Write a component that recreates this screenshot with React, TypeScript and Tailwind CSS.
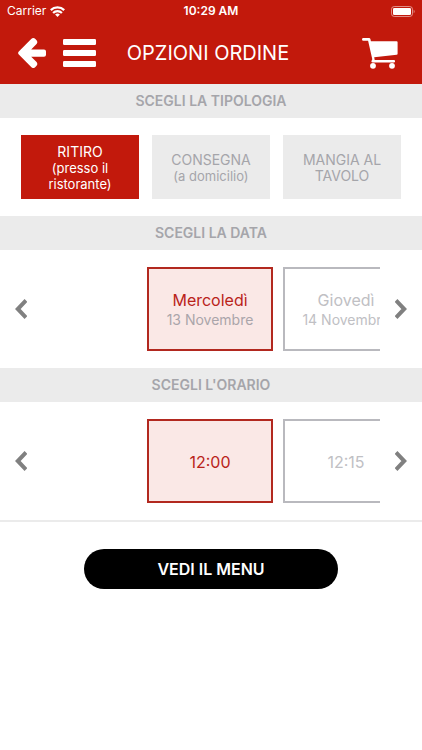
interface Option {
  id: string;
  title: string;
  detail?: string;
}

const ORDER_TYPES: Option[] = [
  { id: "pickup", title: "RITIRO", detail: "(presso il ristorante)" },
  { id: "delivery", title: "CONSEGNA", detail: "(a domicilio)" },
  { id: "table", title: "MANGIA AL TAVOLO" },
];

const DATES: Option[] = [
  { id: "13", title: "Mercoledì", detail: "13 Novembre" },
  { id: "14", title: "Giovedì", detail: "14 Novembre" },
];

const TIMES: Option[] = [
  { id: "1200", title: "12:00" },
  { id: "1215", title: "12:15" },
];

function StatusBar() {
  return (
    <div className="grid h-[22px] grid-cols-3 items-center px-[7px] text-xs">
      <div className="flex items-center gap-1">
        <span>Carrier</span>
        <svg width="15" height="11" viewBox="0 0 15 11" aria-hidden="true">
          <g fill="none" stroke="currentColor" strokeWidth="2.2">
            <path d="M.8 4.1a9.5 9.5 0 0 1 13.4 0" />
            <path d="M3.1 6.9a6.2 6.2 0 0 1 8.8 0" />
          </g>
          <path d="M5.1 8.6a3.5 3.5 0 0 1 4.8 0L7.5 11z" fill="currentColor" />
        </svg>
      </div>
      <span className="text-center font-semibold">10:29 AM</span>
      <svg className="justify-self-end" width="24" height="11" viewBox="0 0 24 11" aria-hidden="true">
        <rect x=".5" y=".5" width="21" height="10" rx="2.8" fill="none" stroke="currentColor" strokeOpacity=".5" />
        <rect x="2" y="2" width="18" height="7" rx="1.3" fill="currentColor" />
        <path d="M22.7 3.8c1.3.4 1.3 3 0 3.4z" fill="currentColor" fillOpacity=".5" />
      </svg>
    </div>
  );
}

function Header() {
  return (
    <header className="bg-[#c2190c] text-white">
      <StatusBar />
      <div className="flex h-[62px] items-center pr-6 pl-[18px]">
        <div className="flex flex-1 items-center gap-4">
          <button type="button" aria-label="Indietro">
            <svg className="block" width="29" height="30" viewBox="0 0 29 30" fill="currentColor" aria-hidden="true">
              <path d="M.8 13.6L13.2 1.1a3 3 0 0 1 4.2 0l.9 1a3 3 0 0 1 0 4.2L13.2 11.4H26a2 2 0 0 1 2 2v3.3a2 2 0 0 1-2 2H13.2l5.1 5.1a3 3 0 0 1 0 4.2l-.9 1a3 3 0 0 1-4.2 0L.8 16.4a2 2 0 0 1 0-2.8z" />
            </svg>
          </button>
          <button type="button" aria-label="Menu">
            <svg className="block" width="33" height="28" viewBox="0 0 33 28" fill="currentColor" aria-hidden="true">
              <rect y="0" width="33" height="6" rx="1.2" />
              <rect y="11" width="33" height="6" rx="1.2" />
              <rect y="22" width="33" height="6" rx="1.2" />
            </svg>
          </button>
        </div>
        <h1 className="text-xl">OPZIONI ORDINE</h1>
        <div className="flex flex-1 justify-end">
          <button type="button" aria-label="Carrello">
            <svg className="block" width="36" height="31" viewBox="0 0 36 31" fill="currentColor" aria-hidden="true">
              <path d="M1.4 0H7a1.5 1.5 0 0 1 1.4 1.1L8.9 3.2H34.6a1 1 0 0 1 1 1v11.6a1 1 0 0 1-.9 1L12.2 19.2l.5 2.8h19.1a1.3 1.3 0 0 1 0 2.6H10.6a1.3 1.3 0 0 1-1-1.9l.7-1.4L6.1 2.8H1.4a1.4 1.4 0 0 1 0-2.8z" />
              <circle cx="11" cy="27.8" r="2.9" />
              <circle cx="30" cy="27.8" r="2.9" />
            </svg>
          </button>
        </div>
      </div>
    </header>
  );
}

function SectionTitle({ children }: { children: string }) {
  return (
    <h2 className="flex h-[34px] items-center justify-center bg-[#ebebeb] text-sm font-semibold text-[#a5a5aa]">
      {children}
    </h2>
  );
}

function Chevron({ d }: { d: string }) {
  return (
    <svg width="12" height="20" viewBox="0 0 12 20" aria-hidden="true">
      <path d={d} fill="none" stroke="#808080" strokeWidth="4" />
    </svg>
  );
}

function Carousel({ items, label }: { items: Option[]; label: string }) {
  return (
    <div className="flex h-[118px] items-center" role="group" aria-label={label}>
      <button type="button" aria-label="Precedente" className="flex w-[42px] shrink-0 justify-center">
        <Chevron d="M11 1.5L2.8 10l8.2 8.5" />
      </button>
      <div className="flex min-w-0 flex-1 gap-[10px] overflow-hidden pl-[calc(50%-106px)]">
        {items.map((item, i) => (
          <button
            key={item.id}
            type="button"
            aria-pressed={i === 0}
            className={
              i === 0
                ? "h-[84px] w-[126px] shrink-0 border-2 border-[#b2281f] bg-[#fae8e6] pt-0.5 text-[#b9231a]"
                : "h-[84px] w-[126px] shrink-0 border-2 border-[#b9b9be] bg-white pt-0.5 text-[#c0c0c4]"
            }
          >
            <span className="block text-base leading-5">{item.title}</span>
            {item.detail && (
              <span className={i === 0 ? "block text-sm leading-5 text-[#aaa5aa]" : "block text-sm leading-5"}>
                {item.detail}
              </span>
            )}
          </button>
        ))}
      </div>
      <button type="button" aria-label="Successivo" className="flex w-[42px] shrink-0 justify-center">
        <Chevron d="M1 1.5L9.2 10 1 18.5" />
      </button>
    </div>
  );
}

export default function App() {
  return (
    <div className="min-h-screen bg-white font-['Inter',sans-serif]">
      <Header />
      <main>
        <SectionTitle>SCEGLI LA TIPOLOGIA</SectionTitle>
        <div className="grid grid-cols-3 gap-[13px] px-[21px] py-[17px]">
          {ORDER_TYPES.map((type, i) => (
            <button
              key={type.id}
              type="button"
              aria-pressed={i === 0}
              className={
                i === 0
                  ? "h-16 bg-[#c2190c] px-4 pt-0.5 text-white"
                  : "h-16 bg-[#ebebeb] px-4 pt-0.5 text-[#a5a5aa]"
              }
            >
              <span className="block text-sm leading-4">{type.title}</span>
              {type.detail && <span className="block text-[13px] leading-4">{type.detail}</span>}
            </button>
          ))}
        </div>

        <SectionTitle>SCEGLI LA DATA</SectionTitle>
        <Carousel items={DATES} label="Data" />

        <SectionTitle>SCEGLI L'ORARIO</SectionTitle>
        <Carousel items={TIMES} label="Orario" />

        <div className="flex justify-center border-t-2 border-[#ebebeb] pt-[27px]">
          <button type="button" className="h-10 w-3/5 rounded-full bg-black font-semibold text-white">
            VEDI IL MENU
          </button>
        </div>
      </main>
    </div>
  );
}
